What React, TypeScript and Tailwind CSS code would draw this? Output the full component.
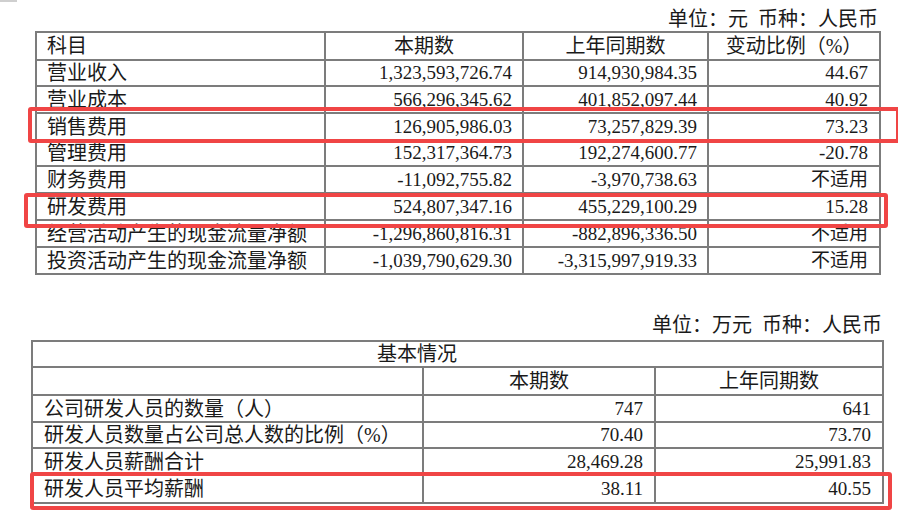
import React from "react";

const rows1: [string, string, string, string][] = [
  ["营业收入", "1,323,593,726.74", "914,930,984.35", "44.67"],
  ["营业成本", "566,296,345.62", "401,852,097.44", "40.92"],
  ["销售费用", "126,905,986.03", "73,257,829.39", "73.23"],
  ["管理费用", "152,317,364.73", "192,274,600.77", "-20.78"],
  ["财务费用", "-11,092,755.82", "-3,970,738.63", "不适用"],
  ["研发费用", "524,807,347.16", "455,229,100.29", "15.28"],
  ["经营活动产生的现金流量净额", "-1,296,860,816.31", "-882,896,336.50", "不适用"],
  ["投资活动产生的现金流量净额", "-1,039,790,629.30", "-3,315,997,919.33", "不适用"],
];

const rows2: [string, string, string][] = [
  ["公司研发人员的数量（人）", "747", "641"],
  ["研发人员数量占公司总人数的比例（%）", "70.40", "73.70"],
  ["研发人员薪酬合计", "28,469.28", "25,991.83"],
  ["研发人员平均薪酬", "38.11", "40.55"],
];

export default function App() {
  return (
    <div className="relative w-[898px] h-[522px] overflow-hidden bg-white text-[#1a1a1a] text-[20px] leading-[22px] font-['Liberation_Serif','Noto_Sans_CJK_SC',serif]">
      <div className="absolute left-0 top-0 h-[2px] w-[17px] bg-[#cfcfcf]" />

      {/* Table 1 */}
      <div className="h-[31px] pt-[8px] pr-[20px] text-right">单位：元&nbsp;&nbsp;币种：人民币</div>
      <div className="ml-[35px] w-[846px] grid grid-cols-[287px_196px_183px_170px] grid-rows-[26px_24px_25px_25px_24px_25px_25px_25px_25px] gap-[2px] p-[2px] bg-[#7c7c7c]">
        <div className="bg-white flex items-center pl-[10px]">科目</div>
        <div className="bg-white flex items-center justify-center">本期数</div>
        <div className="bg-white flex items-center justify-center">上年同期数</div>
        <div className="bg-white flex items-center justify-center">变动比例（%）</div>
        {rows1.map((r) => (
          <React.Fragment key={r[0]}>
            <div className="bg-white flex items-center pl-[10px] whitespace-nowrap">{r[0]}</div>
            <div className="bg-white flex items-center justify-end pr-[10px] text-[19px]">{r[1]}</div>
            <div className="bg-white flex items-center justify-end pr-[10px] text-[19px]">{r[2]}</div>
            <div className="bg-white flex items-center justify-end pr-[11px] text-[19px]">{r[3]}</div>
          </React.Fragment>
        ))}
      </div>

      {/* Table 2 */}
      <div className="mt-[39px] h-[26px] pr-[16px] text-right">单位：万元&nbsp;&nbsp;币种：人民币</div>
      <div className="ml-[31px] w-[853px] grid grid-cols-[389px_230px_226px] grid-rows-[24px_26px_25px_24px_25px_26px] gap-[2px] p-[2px] bg-[#7c7c7c]">
        <div className="col-span-3 bg-white flex items-center pl-[344px]">基本情况</div>
        <div className="bg-white" />
        <div className="bg-white flex items-center justify-center">本期数</div>
        <div className="bg-white flex items-center justify-center">上年同期数</div>
        {rows2.map((r) => (
          <React.Fragment key={r[0]}>
            <div className="bg-white flex items-center pl-[11px] whitespace-nowrap">{r[0]}</div>
            <div className="bg-white flex items-center justify-end pr-[11px] text-[19px]">{r[1]}</div>
            <div className="bg-white flex items-center justify-end pr-[11px] text-[19px]">{r[2]}</div>
          </React.Fragment>
        ))}
      </div>

      {/* Red highlight boxes */}
      <div className="absolute left-[28px] top-[107px] w-[872px] h-[36px] border-[4px] border-[#f04545] rounded-[3px]" />
      <div className="absolute left-[24px] top-[193px] w-[864px] h-[35px] border-[4px] border-[#f04545] rounded-[3px]" />
      <div className="absolute left-[30px] top-[472px] w-[862px] h-[38px] border-[4px] border-[#f04545] rounded-[3px]" />
    </div>
  );
}
